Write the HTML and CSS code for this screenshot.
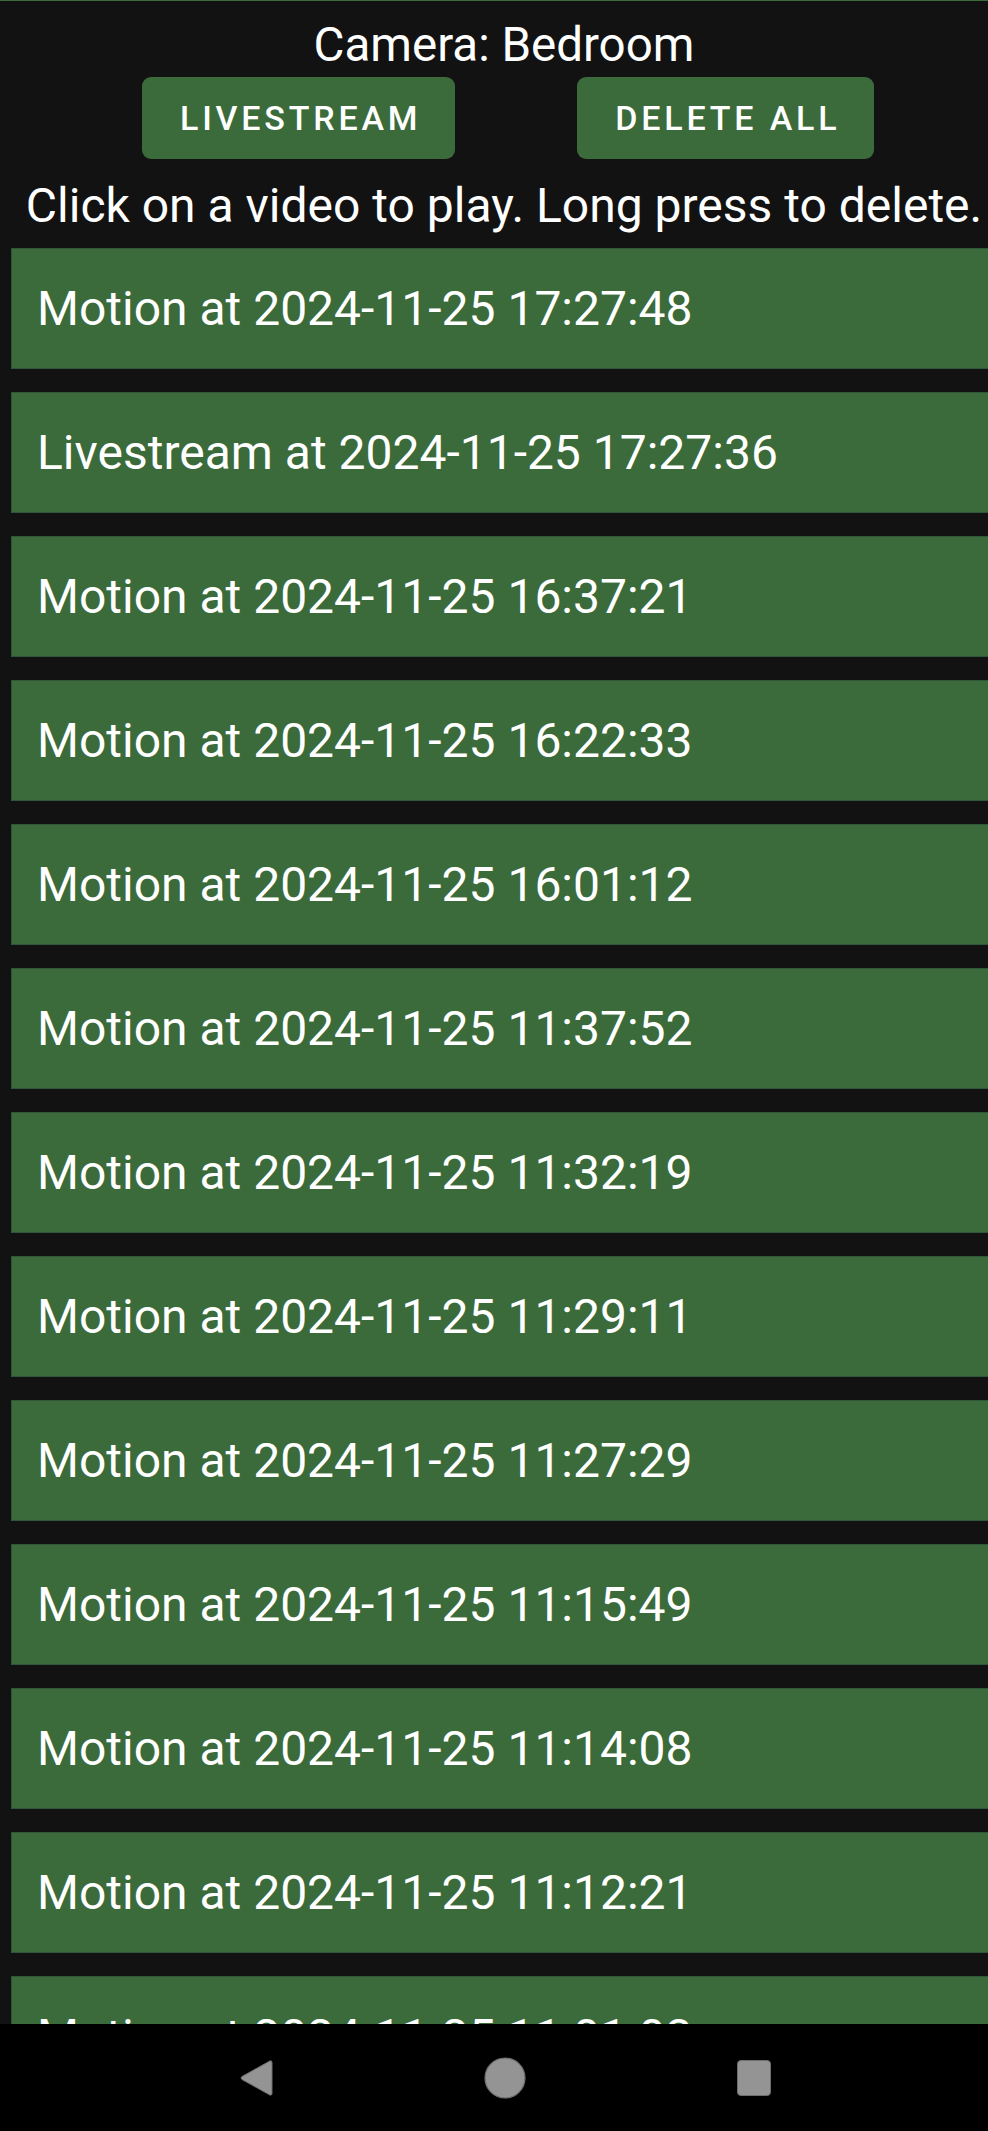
FILE: index.html
```html
<!DOCTYPE html>
<html>
<head>
<meta charset="utf-8">
<link rel="stylesheet" href="styles.css">
</head>
<body>
<div class="screen">
  <div class="content">
    <h1 class="title">Camera: Bedroom</h1>
    <div class="actions">
      <button class="btn">LIVESTREAM</button>
      <button class="btn">DELETE ALL</button>
    </div>
    <p class="hint">Click on a video to play. Long press to delete.</p>
    <ul class="list">
      <li class="item">Motion at 2024-11-25 17:27:48</li>
      <li class="item">Livestream at 2024-11-25 17:27:36</li>
      <li class="item">Motion at 2024-11-25 16:37:21</li>
      <li class="item">Motion at 2024-11-25 16:22:33</li>
      <li class="item">Motion at 2024-11-25 16:01:12</li>
      <li class="item">Motion at 2024-11-25 11:37:52</li>
      <li class="item">Motion at 2024-11-25 11:32:19</li>
      <li class="item">Motion at 2024-11-25 11:29:11</li>
      <li class="item">Motion at 2024-11-25 11:27:29</li>
      <li class="item">Motion at 2024-11-25 11:15:49</li>
      <li class="item">Motion at 2024-11-25 11:14:08</li>
      <li class="item">Motion at 2024-11-25 11:12:21</li>
      <li class="item">Motion at 2024-11-25 11:01:03</li>
      <li class="item">Motion at 2024-11-25 10:58:40</li>
    </ul>
  </div>
  <nav class="navbar">
    <svg class="nav-icon" width="36" height="40" viewBox="0 0 36 40"><path d="M31 3.5 C33 2 34 3 34 5 L34 35 C34 37 33 38 31 36.5 L4 21.5 C2.8 20.8 2.8 19.2 4 18.5 Z" fill="#949494" stroke="#6e6e6e" stroke-width="1"/></svg>
    <svg class="nav-icon" width="42" height="42" viewBox="0 0 42 42"><circle cx="21" cy="21" r="20" fill="#949494" stroke="#6e6e6e" stroke-width="1.2"/></svg>
    <svg class="nav-icon" width="34" height="36" viewBox="0 0 34 36"><rect x="0.5" y="0.5" width="33" height="35" rx="3.5" fill="#949494" stroke="#6e6e6e" stroke-width="1"/></svg>
  </nav>
</div>
</body>
</html>
```
FILE: styles.css
```css
html, body {
  margin: 0;
  padding: 0;
  background: #121212;
  overflow: hidden;
}
.screen {
  width: 988px;
  height: 2131px;
  display: flex;
  flex-direction: column;
  overflow: hidden;
  border-top: 1px solid #3b6a3b;
  box-sizing: border-box;
  font-family: Roboto, "Noto Sans", sans-serif;
  color: #ffffff;
}
.content {
  flex: 1;
  min-height: 0;
  overflow: hidden;
  padding-left: 11px;
}
.title {
  margin: 0;
  padding-top: 18px;
  font-size: 47.5px;
  font-weight: 400;
  line-height: 52px;
  text-align: center;
  width: 986px;
}
.actions {
  display: flex;
  gap: 122px;
  padding-left: 131px;
  margin-top: 6px;
}
.btn {
  height: 82px;
  padding: 0 34px 0 38px;
  border: none;
  border-radius: 9px;
  background: #3b6a3b;
  color: #ffffff;
  font-family: Roboto, "Noto Sans", sans-serif;
  font-weight: 500;
  font-size: 34px;
  letter-spacing: 3.8px;
}
.hint {
  margin: 0;
  margin-top: 21px;
  font-size: 48px;
  line-height: 52px;
  text-align: center;
  width: 986px;
  white-space: nowrap;
}
.list {
  list-style: none;
  margin: 16px 0 0 0;
  padding: 0;
  display: flex;
  flex-direction: column;
  gap: 23px;
}
.item {
  height: 121px;
  box-sizing: border-box;
  border: 1px solid #30563a;
  border-right: none;
  background: #3b6a3b;
  display: flex;
  align-items: center;
  padding-left: 25px;
  font-size: 48px;
}
.navbar {
  height: 107px;
  flex: none;
  background: #000000;
  display: flex;
  align-items: center;
  justify-content: center;
  padding-left: 20px;
}
.nav-icon:nth-child(1) { margin-right: 210px; }
.nav-icon:nth-child(2) { margin-right: 211px; }
```
